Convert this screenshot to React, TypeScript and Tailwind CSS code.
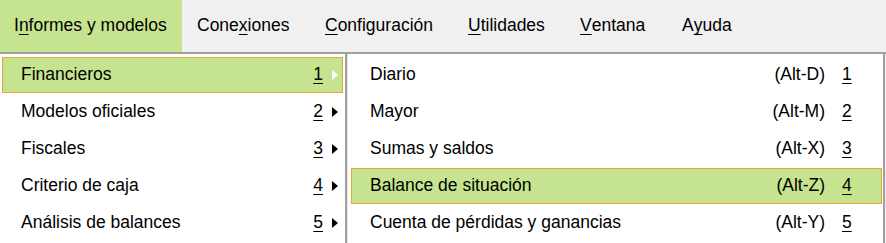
import React from 'react';

const font = { fontFamily: '"Liberation Sans", Arial, sans-serif' };

function U({ children }: { children: React.ReactNode }) {
  return <span className="underline underline-offset-[3px] decoration-1">{children}</span>;
}

// widths follow the spacing of the original Windows menu bar
const menuBar: { pre: string; key: string; post: string; cls: string }[] = [
  { pre: 'I', key: 'n', post: 'formes y modelos', cls: 'w-[182px] pl-[14px] bg-[#c6e48f]' },
  { pre: 'Cone', key: 'x', post: 'iones', cls: 'w-[143px] pl-[15px]' },
  { pre: '', key: 'C', post: 'onfiguración', cls: 'w-[143px]' },
  { pre: '', key: 'U', post: 'tilidades', cls: 'w-[112px]' },
  { pre: '', key: 'V', post: 'entana', cls: 'w-[102px]' },
  { pre: 'A', key: 'y', post: 'uda', cls: '' },
];

const groups = ['Financieros', 'Modelos oficiales', 'Fiscales', 'Criterio de caja', 'Análisis de balances'];

const reports = [
  { label: 'Diario', alt: '(Alt-D)' },
  { label: 'Mayor', alt: '(Alt-M)' },
  { label: 'Sumas y saldos', alt: '(Alt-X)' },
  { label: 'Balance de situación', alt: '(Alt-Z)' },
  { label: 'Cuenta de pérdidas y ganancias', alt: '(Alt-Y)' },
];

function Arrow({ white }: { white?: boolean }) {
  return (
    <svg width="6" height="10" viewBox="0 0 6 10" className="shrink-0">
      <polygon points="0,0 6,5 0,10" fill={white ? '#ffffff' : '#000000'} />
    </svg>
  );
}

export default function App() {
  return (
    <div className="w-[886px] h-[243px] overflow-hidden bg-[#f0f0f0] text-black text-[17.5px] leading-none" style={font}>
      <div className="h-[52px] flex items-stretch">
        {menuBar.map((m, i) => (
          <div key={i} className={['flex items-center shrink-0', m.cls].join(' ')}>
            {m.pre}
            <U>{m.key}</U>
            {m.post}
          </div>
        ))}
      </div>

      <div className="flex border-t-2 border-[#a0a0a0] h-[191px]">
        <div className="w-[347px] shrink-0 bg-white border-r-2 border-[#a0a0a0] pt-[3px]">
          {groups.map((g, i) => {
            const hi = i === 0;
            return (
              <div
                key={g}
                className={[
                  'mx-[2px] h-[36px] mb-[1px] flex items-center pl-[18px] pr-[4px] border',
                  hi ? 'bg-[#c6e48f] border-[#e6a72c]' : 'border-transparent',
                ].join(' ')}
              >
                <span className="flex-1">{g}</span>
                <U>{i + 1}</U>
                <span className="ml-[9px]">
                  <Arrow white={hi} />
                </span>
              </div>
            );
          })}
        </div>

        <div className="w-[538px] shrink-0 bg-white border-l border-[#e4e4e4] border-r-2 border-r-[#a0a0a0] pt-[3px]">
          {reports.map((r, i) => {
            const hi = i === 3;
            return (
              <div
                key={r.label}
                className={[
                  'ml-[3px] mr-[1px] h-[36px] mb-[1px] flex items-center pl-[18px] pr-[26px] border',
                  hi ? 'bg-[#c6e48f] border-[#e6a72c]' : 'border-transparent',
                ].join(' ')}
              >
                <span className="flex-1">{r.label}</span>
                <span className="mr-[17px]">{r.alt}</span>
                <span className="w-[13px]">
                  <U>{i + 1}</U>
                </span>
              </div>
            );
          })}
        </div>
      </div>
    </div>
  );
}
